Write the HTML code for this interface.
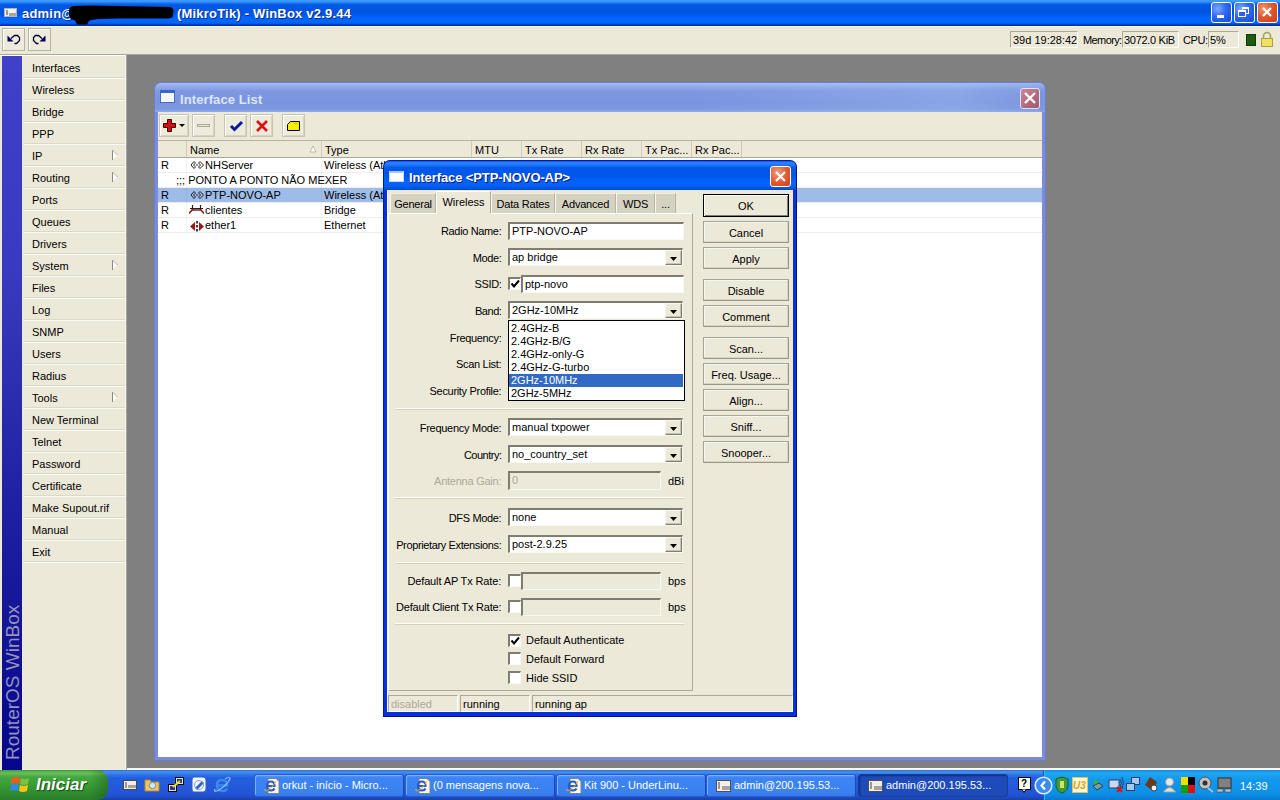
<!DOCTYPE html><html><head><meta charset="utf-8"><style>
*{margin:0;padding:0;box-sizing:border-box}
html,body{width:1280px;height:800px;overflow:hidden;background:#808080;font-family:"Liberation Sans",sans-serif}
.a{position:absolute}
.t{position:absolute;font-size:11px;line-height:13px;white-space:nowrap;color:#000}
.sunk{background:#fff;border-top:1px solid #ACA899;border-left:1px solid #ACA899;border-right:1px solid #fff;border-bottom:1px solid #fff;box-shadow:inset 1px 1px 0 #716F64, inset -1px -1px 0 #F1EFE2}
.btn{background:#ECE9D8;border:1px solid #ACA899;box-shadow:inset 1px 1px 0 #fff, inset -1px -1px 0 #D4D0C8}
.raised{background:#ECE9D8;border-top:1px solid #F1EFE2;border-left:1px solid #F1EFE2;border-right:1px solid #716F64;border-bottom:1px solid #716F64;box-shadow:inset 1px 1px 0 #fff, inset -1px -1px 0 #ACA899}
.chk{background:#fff;border-top:1px solid #ACA899;border-left:1px solid #ACA899;border-right:1px solid #fff;border-bottom:1px solid #fff;box-shadow:inset 1px 1px 0 #716F64, inset -1px -1px 0 #F1EFE2}
</style></head><body>
<div class="a" style="left:0px;top:0px;width:1280px;height:26px;background:linear-gradient(to bottom,#3C9CFF 0px,#3A96FF 1.5px,#1C74F0 3px,#0058E4 5px,#0054E0 12px,#0058EC 15px,#0062FC 17px,#0068FF 20px,#0064FA 23px,#0050D8 24px,#0032A8 25px,#0030A0 26px)"></div><div class="a" style="left:0px;top:26px;width:1280px;height:1px;background:#E4E8F4"></div><div class="a" style="left:4px;top:8px;width:13px;height:9px;background:#F2F0EA;border:1px solid #B8B4A8"><div class="a" style="left:1px;top:1px;width:2px;height:5px;background:#9C9890"></div><div class="a" style="left:4px;top:4px;width:7px;height:3px;background:#A8A49C"></div></div><div class="t" style="left:22px;top:7px;font-size:13px;font-weight:bold;color:#fff;letter-spacing:0.2px;text-shadow:1px 1px 0 #0A2A80">admin@</div><svg class="a" style="left:0;top:0" width="180" height="26"><path d="M69 11 Q69 6 75 6 L90 5.5 L170 7 Q174 8 173.5 12 L172.5 17 Q171 19 160 18.5 L120 18.5 L100 19 Q92 19.5 89 21 L87 24.5 L77 24.5 L75 20.5 Q69 19 69 15 Z" fill="#000"/></svg><div class="t" style="left:177px;top:7px;font-size:13px;font-weight:bold;color:#fff;letter-spacing:0.2px;text-shadow:1px 1px 0 #0A2A80">(MikroTik) - WinBox v2.9.44</div><div class="a" style="left:1211px;top:2px;width:21px;height:21px;border:1px solid #fff;border-radius:3px;background:radial-gradient(circle at 30% 30%,#7FA8FF 0%,#2D68F0 45%,#1A48D8 100%)"><div class="a" style="left:5px;top:12px;width:7px;height:3px;background:#fff"></div></div><div class="a" style="left:1234px;top:2px;width:21px;height:21px;border:1px solid #fff;border-radius:3px;background:radial-gradient(circle at 30% 30%,#7FA8FF 0%,#2D68F0 45%,#1A48D8 100%)"><div class="a" style="left:7px;top:4px;width:7px;height:7px;border:1px solid #fff;border-top-width:2px"></div><div class="a" style="left:3px;top:7px;width:8px;height:7px;border:1px solid #fff;border-top-width:2px;background:#2D60EA"></div></div><div class="a" style="left:1257px;top:2px;width:21px;height:21px;border:1px solid #fff;border-radius:3px;background:radial-gradient(circle at 30% 30%,#F09A78 0%,#E2582D 45%,#C8401A 100%)"><svg class="a" style="left:0;top:0" width="19" height="19"><path d="M5 5 L13 13 M13 5 L5 13" stroke="#fff" stroke-width="2.2"/></svg></div><div class="a" style="left:0px;top:26px;width:1280px;height:29px;background:#ECE9D8;border-top:1px solid #F7F5EE"></div><div class="a" style="left:0px;top:54px;width:1280px;height:1px;background:#ACA899"></div><div class="a" style="left:0px;top:55px;width:127px;height:1px;background:#fff"></div><div class="a" style="left:2px;top:28px;width:23px;height:23px;border:1px solid #B8B4A4;background:#EEEBDD;box-shadow:inset 1px 1px 0 #fff"></div><div class="a" style="left:28px;top:28px;width:23px;height:23px;border:1px solid #B8B4A4;background:#EEEBDD;box-shadow:inset 1px 1px 0 #fff"></div><svg class="a" style="left:0;top:26px" width="56" height="28"><path d="M7.5 9.5 L7.5 15.5 L13.5 15.5 Z" fill="#00005A"/><path d="M11 12.5 L14.5 9.5 L17.5 9.5 L19.5 11.5 L19.5 14.5 L16.5 17.5 L14.5 17.5" fill="none" stroke="#000030" stroke-width="1.3"/><path d="M45.5 9.5 L45.5 15.5 L39.5 15.5 Z" fill="#00005A"/><path d="M42 12.5 L38.5 9.5 L35.5 9.5 L33.5 11.5 L33.5 14.5 L36.5 17.5 L38.5 17.5" fill="none" stroke="#000030" stroke-width="1.3"/></svg><div class="a" style="left:1010px;top:31px;width:68px;height:17px;border:1px solid #ACA899;border-right-color:#fff;border-bottom-color:#fff"></div><div class="t" style="left:1013px;top:34px;">39d 19:28:42</div><div class="t" style="left:1083px;top:34px;letter-spacing:-0.6px">Memory:</div><div class="a" style="left:1122px;top:31px;width:57px;height:17px;border:1px solid #ACA899;border-right-color:#fff;border-bottom-color:#fff"></div><div class="t" style="left:1124px;top:34px;letter-spacing:-0.3px">3072.0 KiB</div><div class="t" style="left:1183px;top:34px;letter-spacing:-0.4px">CPU:</div><div class="a" style="left:1208px;top:31px;width:31px;height:17px;border:1px solid #ACA899;border-right-color:#fff;border-bottom-color:#fff"></div><div class="t" style="left:1210px;top:34px;">5%</div><div class="a" style="left:1246px;top:34px;width:10px;height:12px;background:#1E5A12;border:1px solid #0E3A08"></div><svg class="a" style="left:1260px;top:31px" width="14" height="17"><path d="M3.5 8 V5 A3.5 3.5 0 0 1 10.5 5 V8" fill="none" stroke="#A8A060" stroke-width="1.6"/><rect x="1.5" y="7.5" width="11" height="8" fill="#F0E060" stroke="#B0A040"/></svg><div class="a" style="left:0px;top:56px;width:127px;height:714px;background:#ECE9D8"></div><div class="a" style="left:2px;top:56px;width:20px;height:714px;background:linear-gradient(to bottom,#4040C8 0%,#3A3AC0 30%,#1E1EA0 65%,#06068A 100%)"></div><div class="a" style="left:125px;top:55px;width:1px;height:715px;background:#F4F2E8"></div><div class="a" style="left:126px;top:55px;width:1px;height:715px;background:#ACA899"></div><div class="a" style="left:4px;top:760px;transform-origin:0 0;transform:rotate(-90deg);font-size:19px;line-height:17px;color:#9494BC;white-space:nowrap;width:170px">RouterOS WinBox</div><div class="a" style="left:24px;top:77px;width:101px;height:1px;background:#DCD8CA"></div><div class="a" style="left:24px;top:78px;width:101px;height:1px;background:#FAF8F2"></div><div class="t" style="left:32px;top:62px;">Interfaces</div><div class="a" style="left:24px;top:99px;width:101px;height:1px;background:#DCD8CA"></div><div class="a" style="left:24px;top:100px;width:101px;height:1px;background:#FAF8F2"></div><div class="t" style="left:32px;top:84px;">Wireless</div><div class="a" style="left:24px;top:121px;width:101px;height:1px;background:#DCD8CA"></div><div class="a" style="left:24px;top:122px;width:101px;height:1px;background:#FAF8F2"></div><div class="t" style="left:32px;top:106px;">Bridge</div><div class="a" style="left:24px;top:143px;width:101px;height:1px;background:#DCD8CA"></div><div class="a" style="left:24px;top:144px;width:101px;height:1px;background:#FAF8F2"></div><div class="t" style="left:32px;top:128px;">PPP</div><div class="a" style="left:24px;top:165px;width:101px;height:1px;background:#DCD8CA"></div><div class="a" style="left:24px;top:166px;width:101px;height:1px;background:#FAF8F2"></div><div class="t" style="left:32px;top:150px;">IP</div><svg class="a" style="left:111px;top:149px" width="8" height="12"><path d="M1.5 1 L6.5 6 L1.5 11 Z" fill="#FFFFFF"/><path d="M1.5 1 L1.5 11" stroke="#8C8878" stroke-width="1"/><path d="M1.5 1 L6.5 6" stroke="#B8B4A8" stroke-width="1"/></svg><div class="a" style="left:24px;top:187px;width:101px;height:1px;background:#DCD8CA"></div><div class="a" style="left:24px;top:188px;width:101px;height:1px;background:#FAF8F2"></div><div class="t" style="left:32px;top:172px;">Routing</div><svg class="a" style="left:111px;top:171px" width="8" height="12"><path d="M1.5 1 L6.5 6 L1.5 11 Z" fill="#FFFFFF"/><path d="M1.5 1 L1.5 11" stroke="#8C8878" stroke-width="1"/><path d="M1.5 1 L6.5 6" stroke="#B8B4A8" stroke-width="1"/></svg><div class="a" style="left:24px;top:209px;width:101px;height:1px;background:#DCD8CA"></div><div class="a" style="left:24px;top:210px;width:101px;height:1px;background:#FAF8F2"></div><div class="t" style="left:32px;top:194px;">Ports</div><div class="a" style="left:24px;top:231px;width:101px;height:1px;background:#DCD8CA"></div><div class="a" style="left:24px;top:232px;width:101px;height:1px;background:#FAF8F2"></div><div class="t" style="left:32px;top:216px;">Queues</div><div class="a" style="left:24px;top:253px;width:101px;height:1px;background:#DCD8CA"></div><div class="a" style="left:24px;top:254px;width:101px;height:1px;background:#FAF8F2"></div><div class="t" style="left:32px;top:238px;">Drivers</div><div class="a" style="left:24px;top:275px;width:101px;height:1px;background:#DCD8CA"></div><div class="a" style="left:24px;top:276px;width:101px;height:1px;background:#FAF8F2"></div><div class="t" style="left:32px;top:260px;">System</div><svg class="a" style="left:111px;top:259px" width="8" height="12"><path d="M1.5 1 L6.5 6 L1.5 11 Z" fill="#FFFFFF"/><path d="M1.5 1 L1.5 11" stroke="#8C8878" stroke-width="1"/><path d="M1.5 1 L6.5 6" stroke="#B8B4A8" stroke-width="1"/></svg><div class="a" style="left:24px;top:297px;width:101px;height:1px;background:#DCD8CA"></div><div class="a" style="left:24px;top:298px;width:101px;height:1px;background:#FAF8F2"></div><div class="t" style="left:32px;top:282px;">Files</div><div class="a" style="left:24px;top:319px;width:101px;height:1px;background:#DCD8CA"></div><div class="a" style="left:24px;top:320px;width:101px;height:1px;background:#FAF8F2"></div><div class="t" style="left:32px;top:304px;">Log</div><div class="a" style="left:24px;top:341px;width:101px;height:1px;background:#DCD8CA"></div><div class="a" style="left:24px;top:342px;width:101px;height:1px;background:#FAF8F2"></div><div class="t" style="left:32px;top:326px;">SNMP</div><div class="a" style="left:24px;top:363px;width:101px;height:1px;background:#DCD8CA"></div><div class="a" style="left:24px;top:364px;width:101px;height:1px;background:#FAF8F2"></div><div class="t" style="left:32px;top:348px;">Users</div><div class="a" style="left:24px;top:385px;width:101px;height:1px;background:#DCD8CA"></div><div class="a" style="left:24px;top:386px;width:101px;height:1px;background:#FAF8F2"></div><div class="t" style="left:32px;top:370px;">Radius</div><div class="a" style="left:24px;top:407px;width:101px;height:1px;background:#DCD8CA"></div><div class="a" style="left:24px;top:408px;width:101px;height:1px;background:#FAF8F2"></div><div class="t" style="left:32px;top:392px;">Tools</div><svg class="a" style="left:111px;top:391px" width="8" height="12"><path d="M1.5 1 L6.5 6 L1.5 11 Z" fill="#FFFFFF"/><path d="M1.5 1 L1.5 11" stroke="#8C8878" stroke-width="1"/><path d="M1.5 1 L6.5 6" stroke="#B8B4A8" stroke-width="1"/></svg><div class="a" style="left:24px;top:429px;width:101px;height:1px;background:#DCD8CA"></div><div class="a" style="left:24px;top:430px;width:101px;height:1px;background:#FAF8F2"></div><div class="t" style="left:32px;top:414px;">New Terminal</div><div class="a" style="left:24px;top:451px;width:101px;height:1px;background:#DCD8CA"></div><div class="a" style="left:24px;top:452px;width:101px;height:1px;background:#FAF8F2"></div><div class="t" style="left:32px;top:436px;">Telnet</div><div class="a" style="left:24px;top:473px;width:101px;height:1px;background:#DCD8CA"></div><div class="a" style="left:24px;top:474px;width:101px;height:1px;background:#FAF8F2"></div><div class="t" style="left:32px;top:458px;">Password</div><div class="a" style="left:24px;top:495px;width:101px;height:1px;background:#DCD8CA"></div><div class="a" style="left:24px;top:496px;width:101px;height:1px;background:#FAF8F2"></div><div class="t" style="left:32px;top:480px;">Certificate</div><div class="a" style="left:24px;top:517px;width:101px;height:1px;background:#DCD8CA"></div><div class="a" style="left:24px;top:518px;width:101px;height:1px;background:#FAF8F2"></div><div class="t" style="left:32px;top:502px;">Make Supout.rif</div><div class="a" style="left:24px;top:539px;width:101px;height:1px;background:#DCD8CA"></div><div class="a" style="left:24px;top:540px;width:101px;height:1px;background:#FAF8F2"></div><div class="t" style="left:32px;top:524px;">Manual</div><div class="a" style="left:24px;top:561px;width:101px;height:1px;background:#DCD8CA"></div><div class="a" style="left:24px;top:562px;width:101px;height:1px;background:#FAF8F2"></div><div class="t" style="left:32px;top:546px;">Exit</div><div class="a" style="left:127px;top:55px;width:1153px;height:714px;background:#808080"></div><div class="a" style="left:127px;top:768px;width:1153px;height:2px;background:#F8F8F8"></div><div class="a" style="left:154px;top:82px;width:892px;height:679px;background:#7C8CDC;border-radius:7px 7px 0 0;border:1px solid #6C7CD0"></div><div class="a" style="left:155px;top:83px;width:890px;height:29px;border-radius:6px 6px 0 0;background:linear-gradient(to bottom,#A8BEF4 0px,#94AEEC 3px,#7E98E0 8px,#7A94DE 20px,#7E99E0 26px,#90AAE8 29px)"></div><div class="a" style="left:155px;top:83px;width:890px;height:29px;border-radius:6px 6px 0 0;background:linear-gradient(to right,rgba(255,255,255,0) 0%,rgba(255,255,255,0) 60%,rgba(160,190,240,0.4) 90%,rgba(120,150,220,0.2) 100%)"></div><div class="a" style="left:160px;top:90px;width:15px;height:13px;background:#F4F8FF;border:1px solid #4A6AC8;border-top:3px solid #3E62C8"></div><div class="t" style="left:180px;top:93px;font-size:13px;font-weight:bold;color:#DCE6FA;letter-spacing:0.1px">Interface List</div><div class="a" style="left:1020px;top:88px;width:20px;height:21px;border:1px solid #E8E0F0;border-radius:3px;background:linear-gradient(135deg,#C88898 0%,#B06A80 60%,#A05A70 100%)"><svg class="a" style="left:0;top:0" width="18" height="19"><path d="M4 4 L14 14 M14 4 L4 14" stroke="#fff" stroke-width="2.2"/></svg></div><div class="a" style="left:158px;top:112px;width:884px;height:645px;background:#fff"></div><div class="a" style="left:158px;top:112px;width:884px;height:29px;background:#ECE9D8"></div><div class="a" style="left:159px;top:114px;width:30px;height:23px;border:1px solid #C8C4B4;background:#EEEBDD;box-shadow:inset 1px 1px 0 #fff, inset -1px -1px 0 #D8D4C4"></div><div class="a" style="left:192px;top:114px;width:23px;height:23px;border:1px solid #C8C4B4;background:#EEEBDD;box-shadow:inset 1px 1px 0 #fff, inset -1px -1px 0 #D8D4C4"></div><div class="a" style="left:224px;top:114px;width:23px;height:23px;border:1px solid #C8C4B4;background:#EEEBDD;box-shadow:inset 1px 1px 0 #fff, inset -1px -1px 0 #D8D4C4"></div><div class="a" style="left:250px;top:114px;width:23px;height:23px;border:1px solid #C8C4B4;background:#EEEBDD;box-shadow:inset 1px 1px 0 #fff, inset -1px -1px 0 #D8D4C4"></div><div class="a" style="left:282px;top:114px;width:23px;height:23px;border:1px solid #C8C4B4;background:#EEEBDD;box-shadow:inset 1px 1px 0 #fff, inset -1px -1px 0 #D8D4C4"></div><svg class="a" style="left:163px;top:118px" width="26" height="16"><path d="M4 1 H8 V5 H12 V9 H8 V13 H4 V9 H0 V5 H4 Z" transform="translate(0.5,0.5)" fill="#D01010" stroke="#400000" stroke-width="1"/><path d="M16 6 L22 6 L19 9 Z" fill="#000"/></svg><div class="a" style="left:197px;top:124px;width:13px;height:3px;background:#E8E6DC;border:1px solid #ACA899"></div><svg class="a" style="left:229px;top:120px" width="15" height="12"><path d="M2 6 L5.5 9.5 L13 2" fill="none" stroke="#0A1A9A" stroke-width="3"/></svg><svg class="a" style="left:255px;top:119px" width="14" height="14"><path d="M2 2 L12 12 M12 2 L2 12" fill="none" stroke="#D81010" stroke-width="2.6"/></svg><svg class="a" style="left:287px;top:121px" width="14" height="11"><path d="M0.5 3.5 L3.5 0.5 H12.5 V9.5 H0.5 Z" fill="#F4F000" stroke="#000" stroke-width="1"/><path d="M7 2.5 H11" stroke="#C8C000" stroke-width="1"/></svg><div class="a" style="left:158px;top:140px;width:884px;height:18px;background:#ECE9D8;border-top:1px solid #B8B4A4;border-bottom:1px solid #ACA899"></div><div class="a" style="left:186px;top:141px;width:1px;height:16px;background:#CFCBBB"></div><div class="a" style="left:321px;top:141px;width:1px;height:16px;background:#CFCBBB"></div><div class="a" style="left:471px;top:141px;width:1px;height:16px;background:#CFCBBB"></div><div class="a" style="left:521px;top:141px;width:1px;height:16px;background:#CFCBBB"></div><div class="a" style="left:581px;top:141px;width:1px;height:16px;background:#CFCBBB"></div><div class="a" style="left:641px;top:141px;width:1px;height:16px;background:#CFCBBB"></div><div class="a" style="left:691px;top:141px;width:1px;height:16px;background:#CFCBBB"></div><div class="a" style="left:741px;top:141px;width:1px;height:16px;background:#CFCBBB"></div><div class="t" style="left:190px;top:144px;">Name</div><div class="t" style="left:325px;top:144px;">Type</div><div class="t" style="left:475px;top:144px;">MTU</div><div class="t" style="left:525px;top:144px;">Tx Rate</div><div class="t" style="left:585px;top:144px;">Rx Rate</div><div class="t" style="left:645px;top:144px;">Tx Pac...</div><div class="t" style="left:695px;top:144px;">Rx Pac...</div><svg class="a" style="left:309px;top:145px" width="8" height="8"><path d="M4 1 L7 7 L1 7 Z" fill="#fff" stroke="#B0AC9C" stroke-width="0.8"/></svg><div class="a" style="left:158px;top:188px;width:884px;height:14px;background:#9EBCE8"></div><div class="a" style="left:158px;top:172px;width:884px;height:1px;background:#EDEDED"></div><div class="a" style="left:158px;top:187px;width:884px;height:1px;background:#EDEDED"></div><div class="a" style="left:158px;top:202px;width:884px;height:1px;background:#EDEDED"></div><div class="a" style="left:158px;top:217px;width:884px;height:1px;background:#EDEDED"></div><div class="a" style="left:158px;top:232px;width:884px;height:1px;background:#EDEDED"></div><div class="a" style="left:186px;top:158px;width:1px;height:75px;background:rgba(0,0,0,0.05)"></div><div class="a" style="left:321px;top:158px;width:1px;height:75px;background:rgba(0,0,0,0.05)"></div><div class="a" style="left:471px;top:158px;width:1px;height:75px;background:rgba(0,0,0,0.05)"></div><div class="a" style="left:521px;top:158px;width:1px;height:75px;background:rgba(0,0,0,0.05)"></div><div class="a" style="left:581px;top:158px;width:1px;height:75px;background:rgba(0,0,0,0.05)"></div><div class="a" style="left:641px;top:158px;width:1px;height:75px;background:rgba(0,0,0,0.05)"></div><div class="a" style="left:691px;top:158px;width:1px;height:75px;background:rgba(0,0,0,0.05)"></div><div class="a" style="left:741px;top:158px;width:1px;height:75px;background:rgba(0,0,0,0.05)"></div><div class="t" style="left:161px;top:159px;">R</div><div class="t" style="left:161px;top:174px;"></div><div class="t" style="left:161px;top:189px;">R</div><div class="t" style="left:161px;top:204px;">R</div><div class="t" style="left:161px;top:219px;">R</div><div class="t" style="left:176px;top:174px;">;;; PONTO A PONTO NÃO MEXER</div><svg class="a" style="left:190px;top:161px" width="15" height="9"><path d="M4 0.5 L1 4 L4 7.5 L5.5 6 L3.5 4 L5.5 2 Z" fill="none" stroke="#202020" stroke-width="1"/><path d="M10 0.5 L13.5 4 L10 7.5 L8.5 6 L10.5 4 L8.5 2 Z" fill="none" stroke="#202020" stroke-width="1"/><path d="M6 4 H8" stroke="#202020" stroke-width="1.2"/></svg><div class="t" style="left:205px;top:159px;">NHServer</div><div class="t" style="left:324px;top:159px;">Wireless (Ath</div><svg class="a" style="left:190px;top:191px" width="15" height="9"><path d="M4 0.5 L1 4 L4 7.5 L5.5 6 L3.5 4 L5.5 2 Z" fill="none" stroke="#202020" stroke-width="1"/><path d="M10 0.5 L13.5 4 L10 7.5 L8.5 6 L10.5 4 L8.5 2 Z" fill="none" stroke="#202020" stroke-width="1"/><path d="M6 4 H8" stroke="#202020" stroke-width="1.2"/></svg><div class="t" style="left:205px;top:189px;">PTP-NOVO-AP</div><div class="t" style="left:324px;top:189px;">Wireless (Ath</div><svg class="a" style="left:189px;top:205px" width="15" height="10"><path d="M1 3.5 H14" stroke="#202020" stroke-width="1"/><path d="M3.5 0 V5 M11.5 0 V5" stroke="#202020" stroke-width="1.2"/><path d="M0 8.5 L3 5 H12 L15 8.5" fill="none" stroke="#901818" stroke-width="1.6"/></svg><div class="t" style="left:205px;top:204px;">clientes</div><div class="t" style="left:324px;top:204px;">Bridge</div><svg class="a" style="left:189px;top:221px" width="16" height="11"><path d="M6 1 L1 5.5 L6 10 Z" fill="#9A1A1A"/><path d="M10 1 L15 5.5 L10 10 Z" fill="#9A1A1A"/><path d="M8 0 V11" stroke="#101010" stroke-width="1.6" stroke-dasharray="2.5 1.5"/></svg><div class="t" style="left:205px;top:219px;">ether1</div><div class="t" style="left:324px;top:219px;">Ethernet</div><div class="a" style="left:383px;top:160px;width:414px;height:557px;background:#0831D9;border-radius:7px 7px 0 0;border:1px solid #0019A8;border-bottom-color:#001090;border-right-color:#001090"></div><div class="a" style="left:384px;top:161px;width:412px;height:29px;border-radius:6px 6px 0 0;background:linear-gradient(to bottom,#0A58E8 0px,#2E86FF 2px,#1E74F8 4px,#0058EC 7px,#0056E8 14px,#005CF4 18px,#0064FC 21px,#0060F6 25px,#0050DC 28px,#0044C4 29px)"></div><div class="a" style="left:389px;top:171px;width:15px;height:11px;background:#fff;border:1px solid #C8D8F8;border-top:2px solid #A8C4F0"></div><div class="t" style="left:409px;top:171px;font-size:13px;font-weight:bold;color:#fff;letter-spacing:-0.1px;text-shadow:1px 1px 0 #0A1A70">Interface &lt;PTP-NOVO-AP&gt;</div><div class="a" style="left:770px;top:166px;width:21px;height:21px;border:1px solid #fff;border-radius:3px;background:radial-gradient(circle at 35% 30%,#F2A080 0%,#E45C30 50%,#C8401C 100%)"><svg class="a" style="left:0;top:0" width="19" height="19"><path d="M5 5 L14 14 M14 5 L5 14" stroke="#fff" stroke-width="2.2"/></svg></div><div class="a" style="left:387px;top:190px;width:406px;height:522px;background:#ECE9D8"></div><div class="a" style="left:387px;top:190px;width:1px;height:522px;background:#F4F8FF"></div><div class="a" style="left:390px;top:193px;width:46px;height:20px;background:#D6D2C2;border-left:1px solid #F8F6EE;border-top:1px solid #F0EEE4;border-right:1px solid #B8B4A4"></div><div class="t" style="left:390px;width:46px;text-align:center;top:198px;letter-spacing:-0.2px">General</div><div class="a" style="left:491px;top:193px;width:64px;height:20px;background:#D6D2C2;border-left:1px solid #F8F6EE;border-top:1px solid #F0EEE4;border-right:1px solid #B8B4A4"></div><div class="t" style="left:491px;width:64px;text-align:center;top:198px;letter-spacing:-0.2px">Data Rates</div><div class="a" style="left:555px;top:193px;width:61px;height:20px;background:#D6D2C2;border-left:1px solid #F8F6EE;border-top:1px solid #F0EEE4;border-right:1px solid #B8B4A4"></div><div class="t" style="left:555px;width:61px;text-align:center;top:198px;letter-spacing:-0.2px">Advanced</div><div class="a" style="left:616px;top:193px;width:39px;height:20px;background:#D6D2C2;border-left:1px solid #F8F6EE;border-top:1px solid #F0EEE4;border-right:1px solid #B8B4A4"></div><div class="t" style="left:616px;width:39px;text-align:center;top:198px;letter-spacing:-0.2px">WDS</div><div class="a" style="left:655px;top:193px;width:21px;height:20px;background:#D6D2C2;border-left:1px solid #F8F6EE;border-top:1px solid #F0EEE4;border-right:1px solid #B8B4A4"></div><div class="t" style="left:655px;width:21px;text-align:center;top:198px;letter-spacing:-0.2px">...</div><div class="a" style="left:436px;top:191px;width:55px;height:23px;background:#ECE9D8;border-left:1px solid #fff;border-top:1px solid #fff;border-right:1px solid #ACA899"></div><div class="t" style="left:436px;width:55px;text-align:center;top:196px;">Wireless</div><div class="a" style="left:388px;top:213px;width:305px;height:478px;border-left:1px solid #fff;border-top:1px solid #fff;border-right:1px solid #ACA899;border-bottom:1px solid #ACA899"></div><div class="a" style="left:436px;top:213px;width:55px;height:2px;background:#ECE9D8"></div><div class="a" style="left:436px;top:213px;width:1px;height:2px;background:#fff"></div><div class="t" style="right:778.65px;top:225px;letter-spacing:-0.35px;">Radio Name:</div><div class="a" style="left:508px;top:222px;width:176px;height:18px;background:#fff;border-top:2px solid #807C70;border-left:2px solid #807C70;border-right:1px solid #F8F8F4;border-bottom:1px solid #F8F8F4;box-shadow:inset 0 0 0 0 #000"></div><div class="t" style="left:512px;top:225px;">PTP-NOVO-AP</div><div class="t" style="right:778.6px;top:252px;letter-spacing:-0.4px;">Mode:</div><div class="a" style="left:508px;top:248px;width:175px;height:18px;background:#fff;border-top:2px solid #807C70;border-left:2px solid #807C70;border-right:1px solid #F8F8F4;border-bottom:1px solid #F8F8F4;box-shadow:inset 0 0 0 0 #000"></div><div class="t" style="left:512px;top:251px;">ap bridge</div><div class="a" style="left:665px;top:250px;width:17px;height:15px;background:#ECE9D8;border-top:1px solid #F8F6EE;border-left:1px solid #F8F6EE;border-right:1px solid #807C70;border-bottom:1px solid #807C70;box-shadow:inset -1px -1px 0 #C8C4B4"><svg class="a" style="left:4px;top:6px" width="8" height="5"><path d="M0 0 H7 L3.5 4 Z" fill="#000"/></svg></div><div class="t" style="right:778.61px;top:278px;letter-spacing:-0.39px;">SSID:</div><div class="a" style="left:508px;top:277px;width:13px;height:13px;background:#fff;border-top:2px solid #807C70;border-left:2px solid #807C70;border-right:1px solid #F8F8F4;border-bottom:1px solid #F8F8F4"><svg class="a" style="left:0px;top:0px" width="11" height="11"><path d="M1.5 4.5 L4 7.5 L9 1.5" fill="none" stroke="#000" stroke-width="2"/></svg></div><div class="a" style="left:521px;top:275px;width:163px;height:18px;background:#fff;border-top:2px solid #807C70;border-left:2px solid #807C70;border-right:1px solid #F8F8F4;border-bottom:1px solid #F8F8F4;box-shadow:inset 0 0 0 0 #000"></div><div class="t" style="left:525px;top:278px;">ptp-novo</div><div class="t" style="right:778.55px;top:305px;letter-spacing:-0.45px;">Band:</div><div class="a" style="left:508px;top:301px;width:175px;height:18px;background:#fff;border-top:2px solid #807C70;border-left:2px solid #807C70;border-right:1px solid #F8F8F4;border-bottom:1px solid #F8F8F4;box-shadow:inset 0 0 0 0 #000"></div><div class="t" style="left:512px;top:304px;">2GHz-10MHz</div><div class="a" style="left:665px;top:303px;width:17px;height:15px;background:#ECE9D8;border-top:1px solid #F8F6EE;border-left:1px solid #F8F6EE;border-right:1px solid #807C70;border-bottom:1px solid #807C70;box-shadow:inset -1px -1px 0 #C8C4B4"><svg class="a" style="left:4px;top:6px" width="8" height="5"><path d="M0 0 H7 L3.5 4 Z" fill="#000"/></svg></div><div class="t" style="right:778.65px;top:332px;letter-spacing:-0.35px;">Frequency:</div><div class="t" style="right:778.71px;top:358px;letter-spacing:-0.29px;">Scan List:</div><div class="t" style="right:778.69px;top:385px;letter-spacing:-0.31px;">Security Profile:</div><div class="a" style="left:508px;top:320px;width:177px;height:81px;background:#fff;border:1px solid #000"></div><div class="t" style="left:511px;top:322px;">2.4GHz-B</div><div class="t" style="left:511px;top:335px;">2.4GHz-B/G</div><div class="t" style="left:511px;top:348px;">2.4GHz-only-G</div><div class="t" style="left:511px;top:361px;">2.4GHz-G-turbo</div><div class="a" style="left:509px;top:374px;width:174px;height:13px;background:#316AC5"></div><div class="t" style="left:511px;top:374px;color:#fff">2GHz-10MHz</div><div class="t" style="left:511px;top:387px;">2GHz-5MHz</div><div class="a" style="left:395px;top:408px;width:289px;height:1px;background:#FFFDF4"></div><div class="a" style="left:395px;top:409px;width:289px;height:1px;background:#D4D0C0"></div><div class="t" style="right:778.73px;top:422px;letter-spacing:-0.27px;">Frequency Mode:</div><div class="a" style="left:508px;top:418px;width:175px;height:18px;background:#fff;border-top:2px solid #807C70;border-left:2px solid #807C70;border-right:1px solid #F8F8F4;border-bottom:1px solid #F8F8F4;box-shadow:inset 0 0 0 0 #000"></div><div class="t" style="left:512px;top:421px;">manual txpower</div><div class="a" style="left:665px;top:420px;width:17px;height:15px;background:#ECE9D8;border-top:1px solid #F8F6EE;border-left:1px solid #F8F6EE;border-right:1px solid #807C70;border-bottom:1px solid #807C70;box-shadow:inset -1px -1px 0 #C8C4B4"><svg class="a" style="left:4px;top:6px" width="8" height="5"><path d="M0 0 H7 L3.5 4 Z" fill="#000"/></svg></div><div class="t" style="right:778.5px;top:449px;letter-spacing:-0.5px;">Country:</div><div class="a" style="left:508px;top:445px;width:175px;height:18px;background:#fff;border-top:2px solid #807C70;border-left:2px solid #807C70;border-right:1px solid #F8F8F4;border-bottom:1px solid #F8F8F4;box-shadow:inset 0 0 0 0 #000"></div><div class="t" style="left:512px;top:448px;">no_country_set</div><div class="a" style="left:665px;top:447px;width:17px;height:15px;background:#ECE9D8;border-top:1px solid #F8F6EE;border-left:1px solid #F8F6EE;border-right:1px solid #807C70;border-bottom:1px solid #807C70;box-shadow:inset -1px -1px 0 #C8C4B4"><svg class="a" style="left:4px;top:6px" width="8" height="5"><path d="M0 0 H7 L3.5 4 Z" fill="#000"/></svg></div><div class="t" style="right:778.76px;top:475px;letter-spacing:-0.24px;color:#ACA899">Antenna Gain:</div><div class="a" style="left:508px;top:471px;width:153px;height:19px;background:#ECE9D8;border-top:2px solid #807C70;border-left:2px solid #807C70;border-right:1px solid #F8F8F4;border-bottom:1px solid #F8F8F4;box-shadow:inset 0 0 0 0 #000"></div><div class="t" style="left:512px;top:474px;color:#ACA899">0</div><div class="t" style="left:668px;top:475px;">dBi</div><div class="a" style="left:395px;top:497px;width:289px;height:1px;background:#FFFDF4"></div><div class="a" style="left:395px;top:498px;width:289px;height:1px;background:#D4D0C0"></div><div class="t" style="right:778.6600000000001px;top:512px;letter-spacing:-0.34px;">DFS Mode:</div><div class="a" style="left:508px;top:508px;width:175px;height:18px;background:#fff;border-top:2px solid #807C70;border-left:2px solid #807C70;border-right:1px solid #F8F8F4;border-bottom:1px solid #F8F8F4;box-shadow:inset 0 0 0 0 #000"></div><div class="t" style="left:512px;top:511px;">none</div><div class="a" style="left:665px;top:510px;width:17px;height:15px;background:#ECE9D8;border-top:1px solid #F8F6EE;border-left:1px solid #F8F6EE;border-right:1px solid #807C70;border-bottom:1px solid #807C70;box-shadow:inset -1px -1px 0 #C8C4B4"><svg class="a" style="left:4px;top:6px" width="8" height="5"><path d="M0 0 H7 L3.5 4 Z" fill="#000"/></svg></div><div class="t" style="right:778.63px;top:539px;letter-spacing:-0.37px;">Proprietary Extensions:</div><div class="a" style="left:508px;top:535px;width:175px;height:18px;background:#fff;border-top:2px solid #807C70;border-left:2px solid #807C70;border-right:1px solid #F8F8F4;border-bottom:1px solid #F8F8F4;box-shadow:inset 0 0 0 0 #000"></div><div class="t" style="left:512px;top:538px;">post-2.9.25</div><div class="a" style="left:665px;top:537px;width:17px;height:15px;background:#ECE9D8;border-top:1px solid #F8F6EE;border-left:1px solid #F8F6EE;border-right:1px solid #807C70;border-bottom:1px solid #807C70;box-shadow:inset -1px -1px 0 #C8C4B4"><svg class="a" style="left:4px;top:6px" width="8" height="5"><path d="M0 0 H7 L3.5 4 Z" fill="#000"/></svg></div><div class="a" style="left:395px;top:562px;width:289px;height:1px;background:#FFFDF4"></div><div class="a" style="left:395px;top:563px;width:289px;height:1px;background:#D4D0C0"></div><div class="t" style="right:778.87px;top:575px;letter-spacing:-0.13px;">Default AP Tx Rate:</div><div class="a" style="left:508px;top:574px;width:13px;height:13px;background:#fff;border-top:2px solid #807C70;border-left:2px solid #807C70;border-right:1px solid #F8F8F4;border-bottom:1px solid #F8F8F4"></div><div class="a" style="left:521px;top:572px;width:140px;height:18px;background:#ECE9D8;border-top:2px solid #807C70;border-left:2px solid #807C70;border-right:1px solid #F8F8F4;border-bottom:1px solid #F8F8F4;box-shadow:inset 0 0 0 0 #000"></div><div class="t" style="left:668px;top:575px;">bps</div><div class="t" style="right:778.77px;top:601px;letter-spacing:-0.23px;">Default Client Tx Rate:</div><div class="a" style="left:508px;top:600px;width:13px;height:13px;background:#fff;border-top:2px solid #807C70;border-left:2px solid #807C70;border-right:1px solid #F8F8F4;border-bottom:1px solid #F8F8F4"></div><div class="a" style="left:521px;top:598px;width:140px;height:18px;background:#ECE9D8;border-top:2px solid #807C70;border-left:2px solid #807C70;border-right:1px solid #F8F8F4;border-bottom:1px solid #F8F8F4;box-shadow:inset 0 0 0 0 #000"></div><div class="t" style="left:668px;top:601px;">bps</div><div class="a" style="left:395px;top:623px;width:289px;height:1px;background:#FFFDF4"></div><div class="a" style="left:395px;top:624px;width:289px;height:1px;background:#D4D0C0"></div><div class="a" style="left:508px;top:634px;width:13px;height:13px;background:#fff;border-top:2px solid #807C70;border-left:2px solid #807C70;border-right:1px solid #F8F8F4;border-bottom:1px solid #F8F8F4"><svg class="a" style="left:0px;top:0px" width="11" height="11"><path d="M1.5 4.5 L4 7.5 L9 1.5" fill="none" stroke="#000" stroke-width="2"/></svg></div><div class="t" style="left:526px;top:634px;">Default Authenticate</div><div class="a" style="left:508px;top:652px;width:13px;height:13px;background:#fff;border-top:2px solid #807C70;border-left:2px solid #807C70;border-right:1px solid #F8F8F4;border-bottom:1px solid #F8F8F4"></div><div class="t" style="left:526px;top:653px;">Default Forward</div><div class="a" style="left:508px;top:671px;width:13px;height:13px;background:#fff;border-top:2px solid #807C70;border-left:2px solid #807C70;border-right:1px solid #F8F8F4;border-bottom:1px solid #F8F8F4"></div><div class="t" style="left:526px;top:672px;">Hide SSID</div><div class="a" style="left:703px;top:194px;width:86px;height:23px;background:#ECE9D8;border:1px solid #000;box-shadow:inset 1px 1px 0 #fff, inset -1px -1px 0 #807C70"></div><div class="t" style="left:703px;width:86px;text-align:center;top:200px;">OK</div><div class="a" style="left:703px;top:221px;width:86px;height:22px;background:#ECE9D8;border:1px solid #9C9888;border-top-color:#A8A494;border-left-color:#A8A494;box-shadow:inset -1px -1px 0 #D8D4C4, inset 1px 1px 0 #F8F6F0"></div><div class="t" style="left:703px;width:86px;text-align:center;top:227px;">Cancel</div><div class="a" style="left:703px;top:247px;width:86px;height:22px;background:#ECE9D8;border:1px solid #9C9888;border-top-color:#A8A494;border-left-color:#A8A494;box-shadow:inset -1px -1px 0 #D8D4C4, inset 1px 1px 0 #F8F6F0"></div><div class="t" style="left:703px;width:86px;text-align:center;top:253px;">Apply</div><div class="a" style="left:703px;top:279px;width:86px;height:22px;background:#ECE9D8;border:1px solid #9C9888;border-top-color:#A8A494;border-left-color:#A8A494;box-shadow:inset -1px -1px 0 #D8D4C4, inset 1px 1px 0 #F8F6F0"></div><div class="t" style="left:703px;width:86px;text-align:center;top:285px;">Disable</div><div class="a" style="left:703px;top:305px;width:86px;height:22px;background:#ECE9D8;border:1px solid #9C9888;border-top-color:#A8A494;border-left-color:#A8A494;box-shadow:inset -1px -1px 0 #D8D4C4, inset 1px 1px 0 #F8F6F0"></div><div class="t" style="left:703px;width:86px;text-align:center;top:311px;">Comment</div><div class="a" style="left:703px;top:337px;width:86px;height:22px;background:#ECE9D8;border:1px solid #9C9888;border-top-color:#A8A494;border-left-color:#A8A494;box-shadow:inset -1px -1px 0 #D8D4C4, inset 1px 1px 0 #F8F6F0"></div><div class="t" style="left:703px;width:86px;text-align:center;top:343px;">Scan...</div><div class="a" style="left:703px;top:363px;width:86px;height:22px;background:#ECE9D8;border:1px solid #9C9888;border-top-color:#A8A494;border-left-color:#A8A494;box-shadow:inset -1px -1px 0 #D8D4C4, inset 1px 1px 0 #F8F6F0"></div><div class="t" style="left:703px;width:86px;text-align:center;top:369px;">Freq. Usage...</div><div class="a" style="left:703px;top:389px;width:86px;height:22px;background:#ECE9D8;border:1px solid #9C9888;border-top-color:#A8A494;border-left-color:#A8A494;box-shadow:inset -1px -1px 0 #D8D4C4, inset 1px 1px 0 #F8F6F0"></div><div class="t" style="left:703px;width:86px;text-align:center;top:395px;">Align...</div><div class="a" style="left:703px;top:415px;width:86px;height:22px;background:#ECE9D8;border:1px solid #9C9888;border-top-color:#A8A494;border-left-color:#A8A494;box-shadow:inset -1px -1px 0 #D8D4C4, inset 1px 1px 0 #F8F6F0"></div><div class="t" style="left:703px;width:86px;text-align:center;top:421px;">Sniff...</div><div class="a" style="left:703px;top:441px;width:86px;height:22px;background:#ECE9D8;border:1px solid #9C9888;border-top-color:#A8A494;border-left-color:#A8A494;box-shadow:inset -1px -1px 0 #D8D4C4, inset 1px 1px 0 #F8F6F0"></div><div class="t" style="left:703px;width:86px;text-align:center;top:447px;">Snooper...</div><div class="a" style="left:388px;top:695px;width:70px;height:17px;border-top:1px solid #ACA899;border-left:1px solid #ACA899;border-right:1px solid #fff;border-bottom:1px solid #fff"></div><div class="t" style="left:391px;top:698px;color:#ACA899">disabled</div><div class="a" style="left:460px;top:695px;width:70px;height:17px;border-top:1px solid #ACA899;border-left:1px solid #ACA899;border-right:1px solid #fff;border-bottom:1px solid #fff"></div><div class="t" style="left:463px;top:698px;color:#000">running</div><div class="a" style="left:532px;top:695px;width:261px;height:17px;border-top:1px solid #ACA899;border-left:1px solid #ACA899;border-right:1px solid #fff;border-bottom:1px solid #fff"></div><div class="t" style="left:535px;top:698px;color:#000">running ap</div><div class="a" style="left:0px;top:770px;width:1280px;height:30px;background:linear-gradient(to bottom,#3168D5 0px,#4993E6 2px,#2E7BF0 4px,#245EDC 8px,#2457D8 20px,#2050D0 26px,#1941A5 30px)"></div><div class="a" style="left:0px;top:770px;width:108px;height:30px;border-radius:0 11px 11px 0;background:linear-gradient(to bottom,#3C9C3C 0px,#6ABF5A 3px,#44A840 7px,#379B36 16px,#2E8A2E 24px,#2A7E2A 30px)"></div><div class="a" style="left:90px;top:770px;width:18px;height:30px;border-radius:0 11px 11px 0;background:linear-gradient(to right,rgba(0,0,0,0),rgba(20,60,20,0.35))"></div><svg class="a" style="left:10px;top:775px" width="22" height="20"><path d="M2 3 Q6 1 10 3 L9 9 Q5 7 1 9 Z" fill="#F05A22"/><path d="M11 3 Q15 5 19 3 L18 9 Q14 11 10 9 Z" fill="#7CC242"/><path d="M1 10 Q5 8 9 10 L8 16 Q4 14 0 16 Z" fill="#2A8DEB"/><path d="M10 10 Q14 12 18 10 L17 16 Q13 18 9 16 Z" fill="#FDC50E"/></svg><div class="t" style="left:36px;top:781px;font-size:17px;font-weight:bold;font-style:italic;color:#fff;text-shadow:1px 1px 1px #1A4A1A;line-height:20px;top:775px">Iniciar</div><div class="a" style="left:123px;top:780px;width:14px;height:10px;background:#F0EEE6;border:1px solid #404850"><div class="a" style="left:1px;top:1px;width:2px;height:6px;background:#9C9890"></div><div class="a" style="left:4px;top:4px;width:8px;height:3px;background:#A8A49C"></div></div><svg class="a" style="left:144px;top:777px" width="16" height="15"><path d="M1 3 H6 L7.5 5 H15 V14 H1 Z" fill="#F2C65A" stroke="#B08830"/><circle cx="8.5" cy="8.5" r="3.2" fill="#CFE8F8" stroke="#6A8AA0"/></svg><svg class="a" style="left:168px;top:776px" width="16" height="17"><rect x="0.5" y="8.5" width="8" height="7" fill="#E0E0E0" stroke="#000"/><rect x="2" y="10" width="5" height="4" fill="#2A3A7A"/><rect x="7.5" y="1.5" width="8" height="7" fill="#E0E0E0" stroke="#000"/><rect x="9" y="3" width="5" height="4" fill="#2A3A7A"/><path d="M5 11 L12 5" stroke="#F0E020" stroke-width="2.2"/></svg><svg class="a" style="left:191px;top:776px" width="16" height="17"><path d="M3 1 H12 Q15 1 15 4 V13 Q15 16 12 16 H3 Q1 16 1 13 V4 Q1 1 3 1 Z" fill="#F0F4FF" stroke="#3060C0"/><path d="M4 12 L11 5 L13 7 L6 14 Z" fill="#3060C0"/><circle cx="8" cy="9" r="4.5" fill="none" stroke="#80A0E0" stroke-width="1"/></svg><svg class="a" style="left:213px;top:776px" width="18" height="17"><path d="M4.5 9.5 H14 Q14 4 9 4 Q4 4 4 9.5 Q4 15 10 15 Q13 15 14 12.5" fill="none" stroke="#3A8AEA" stroke-width="2.6"/><path d="M2 13 Q0 17 6 14 Q14 9 17 3 Q17 0 12 3" fill="none" stroke="#8CC4FF" stroke-width="1.2"/></svg><div class="a" style="left:254px;top:774px;width:150px;height:23px;border-radius:3px;background:linear-gradient(to bottom,#5C9CF8 0px,#3C84F4 3px,#3A80F0 18px,#3676E4 23px);border:1px solid #2A5CD0;border-right-color:#1A48B8;box-shadow:inset 1px 1px 0 #78B0FF"></div><svg class="a" style="left:264px;top:777px" width="16" height="18"><path d="M4 1.5 H12 L15 4.5 V16.5 H4 Z" fill="#F8F8F0" stroke="#808080"/><path d="M3 9 H10.5 Q10.5 4.5 6.8 4.5 Q3 4.5 3 9 Q3 13.5 7 13.5 Q9.5 13.5 10.5 11.5" fill="none" stroke="#2A5AC8" stroke-width="2.2"/><path d="M1 12 Q0 15 4 13 Q10 9 12 4" fill="none" stroke="#E8B020" stroke-width="1"/></svg><div class="t" style="left:282px;top:779px;color:#fff">orkut - início - Micro...</div><div class="a" style="left:405px;top:774px;width:150px;height:23px;border-radius:3px;background:linear-gradient(to bottom,#5C9CF8 0px,#3C84F4 3px,#3A80F0 18px,#3676E4 23px);border:1px solid #2A5CD0;border-right-color:#1A48B8;box-shadow:inset 1px 1px 0 #78B0FF"></div><svg class="a" style="left:415px;top:777px" width="16" height="18"><path d="M4 1.5 H12 L15 4.5 V16.5 H4 Z" fill="#F8F8F0" stroke="#808080"/><path d="M3 9 H10.5 Q10.5 4.5 6.8 4.5 Q3 4.5 3 9 Q3 13.5 7 13.5 Q9.5 13.5 10.5 11.5" fill="none" stroke="#2A5AC8" stroke-width="2.2"/><path d="M1 12 Q0 15 4 13 Q10 9 12 4" fill="none" stroke="#E8B020" stroke-width="1"/></svg><div class="t" style="left:433px;top:779px;color:#fff">(0 mensagens nova...</div><div class="a" style="left:556px;top:774px;width:150px;height:23px;border-radius:3px;background:linear-gradient(to bottom,#5C9CF8 0px,#3C84F4 3px,#3A80F0 18px,#3676E4 23px);border:1px solid #2A5CD0;border-right-color:#1A48B8;box-shadow:inset 1px 1px 0 #78B0FF"></div><svg class="a" style="left:566px;top:777px" width="16" height="18"><path d="M4 1.5 H12 L15 4.5 V16.5 H4 Z" fill="#F8F8F0" stroke="#808080"/><path d="M3 9 H10.5 Q10.5 4.5 6.8 4.5 Q3 4.5 3 9 Q3 13.5 7 13.5 Q9.5 13.5 10.5 11.5" fill="none" stroke="#2A5AC8" stroke-width="2.2"/><path d="M1 12 Q0 15 4 13 Q10 9 12 4" fill="none" stroke="#E8B020" stroke-width="1"/></svg><div class="t" style="left:584px;top:779px;color:#fff">Kit 900 - UnderLinu...</div><div class="a" style="left:706px;top:774px;width:150px;height:23px;border-radius:3px;background:linear-gradient(to bottom,#5C9CF8 0px,#3C84F4 3px,#3A80F0 18px,#3676E4 23px);border:1px solid #2A5CD0;border-right-color:#1A48B8;box-shadow:inset 1px 1px 0 #78B0FF"></div><div class="a" style="left:716px;top:780px;width:15px;height:12px;background:#F0EEE6;border:1px solid #505050"><div class="a" style="left:1px;top:1px;width:2px;height:7px;background:#9C9890"></div><div class="a" style="left:5px;top:5px;width:8px;height:4px;background:#A8A49C"></div></div><div class="t" style="left:734px;top:779px;color:#fff">admin@200.195.53...</div><div class="a" style="left:858px;top:774px;width:150px;height:23px;border-radius:3px;background:#1E4BBA;border:1px solid #183C98;box-shadow:inset 1px 1px 2px #102E80"></div><div class="a" style="left:868px;top:780px;width:15px;height:12px;background:#F0EEE6;border:1px solid #505050"><div class="a" style="left:1px;top:1px;width:2px;height:7px;background:#9C9890"></div><div class="a" style="left:5px;top:5px;width:8px;height:4px;background:#A8A49C"></div></div><div class="t" style="left:886px;top:779px;color:#fff">admin@200.195.53...</div><div class="a" style="left:1043px;top:770px;width:237px;height:30px;background:linear-gradient(to bottom,#0C8AE4 0px,#22A6F2 3px,#1298EC 10px,#0E8FE6 24px,#0A78D0 30px);border-left:1px solid #0A5CB8;box-shadow:inset 1px 0 0 #34B4F8"></div><div class="t" style="left:1240px;top:780px;color:#fff">14:39</div><svg class="a" style="left:1018px;top:777px" width="14" height="17"><rect x="0.5" y="0.5" width="12" height="12" fill="#FFFFF0" stroke="#000"/><text x="3" y="10" font-size="10" font-weight="bold" font-family="Liberation Sans" fill="#000">?</text><path d="M4 12.5 L6 15.5 L8 12.5" fill="#FFFFF0" stroke="#000"/></svg><svg class="a" style="left:1034px;top:776px" width="19" height="19"><circle cx="9.5" cy="9.5" r="8.3" fill="#3C8CF0" stroke="#DCEBFF" stroke-width="1.6"/><path d="M11 5.5 L7.5 9.5 L11 13.5" fill="none" stroke="#fff" stroke-width="2.2"/></svg><svg class="a" style="left:1055px;top:776px" width="14" height="18"><path d="M7 1 L13 3 V9 Q13 15 7 17 Q1 15 1 9 V3 Z" fill="#3C9C3C" stroke="#1C5C1C"/><rect x="5" y="5" width="4" height="7" fill="#D8E060"/></svg><svg class="a" style="left:1072px;top:777px" width="16" height="16"><rect x="0.5" y="0.5" width="15" height="15" fill="#FFF8D0" stroke="#E0C060"/><text x="1" y="12" font-size="10" font-weight="bold" font-style="italic" font-family="Liberation Sans" fill="#E0A020">U3</text></svg><svg class="a" style="left:1092px;top:777px" width="12" height="16"><path d="M1 9 L7 6 L11 9 L5 13 Z" fill="#80A0A0" stroke="#304040"/><path d="M2 2 L7 5 L2 8 Z" fill="#3CB43C"/></svg><svg class="a" style="left:1108px;top:776px" width="17" height="17"><rect x="1" y="4" width="10" height="8" fill="#C8D8F0" stroke="#304070"/><path d="M12 3 Q15 7 12 11 M14 1 Q17 7 14 13" fill="none" stroke="#304070"/><path d="M9 11 L14 16 M14 11 L9 16" stroke="#E01010" stroke-width="1.8"/></svg><svg class="a" style="left:1126px;top:776px" width="14" height="17"><rect x="5.5" y="1.5" width="8" height="7" fill="#A8C8F0" stroke="#304070"/><rect x="0.5" y="7.5" width="8" height="7" fill="#A8C8F0" stroke="#304070"/></svg><svg class="a" style="left:1144px;top:776px" width="14" height="17"><path d="M1 9 L6 1 L13 6 L9 15 Z" fill="#6A3A1A"/><circle cx="10" cy="12" r="3" fill="#F0F0F0" stroke="#404040"/></svg><svg class="a" style="left:1163px;top:776px" width="13" height="17"><circle cx="6.5" cy="6" r="4" fill="#E8E8E8" stroke="#A0A0A0"/><path d="M0.5 16 Q6.5 7 12.5 16 Z" fill="#E0E0E0" stroke="#A0A0A0"/></svg><svg class="a" style="left:1181px;top:777px" width="14" height="16"><rect x="0" y="0" width="7" height="8" fill="#F0E000"/><rect x="7" y="0" width="7" height="8" fill="#000"/><rect x="0" y="8" width="7" height="8" fill="#10A010"/><rect x="7" y="8" width="7" height="8" fill="#E01010"/></svg><svg class="a" style="left:1198px;top:776px" width="16" height="17"><circle cx="7" cy="7" r="6" fill="#C0C0C0" stroke="#505050"/><circle cx="7" cy="7" r="2.5" fill="#303030"/><path d="M10 12 L15 16" stroke="#A0C0E0" stroke-width="2"/></svg><svg class="a" style="left:1217px;top:777px" width="15" height="16"><rect x="1" y="1" width="13" height="10" fill="#808080" stroke="#303030"/><rect x="0" y="12" width="6" height="3" fill="#C0C0C0" stroke="#303030" stroke-width="0.5"/><rect x="8" y="12" width="6" height="3" fill="#C0C0C0" stroke="#303030" stroke-width="0.5"/></svg></body></html>
